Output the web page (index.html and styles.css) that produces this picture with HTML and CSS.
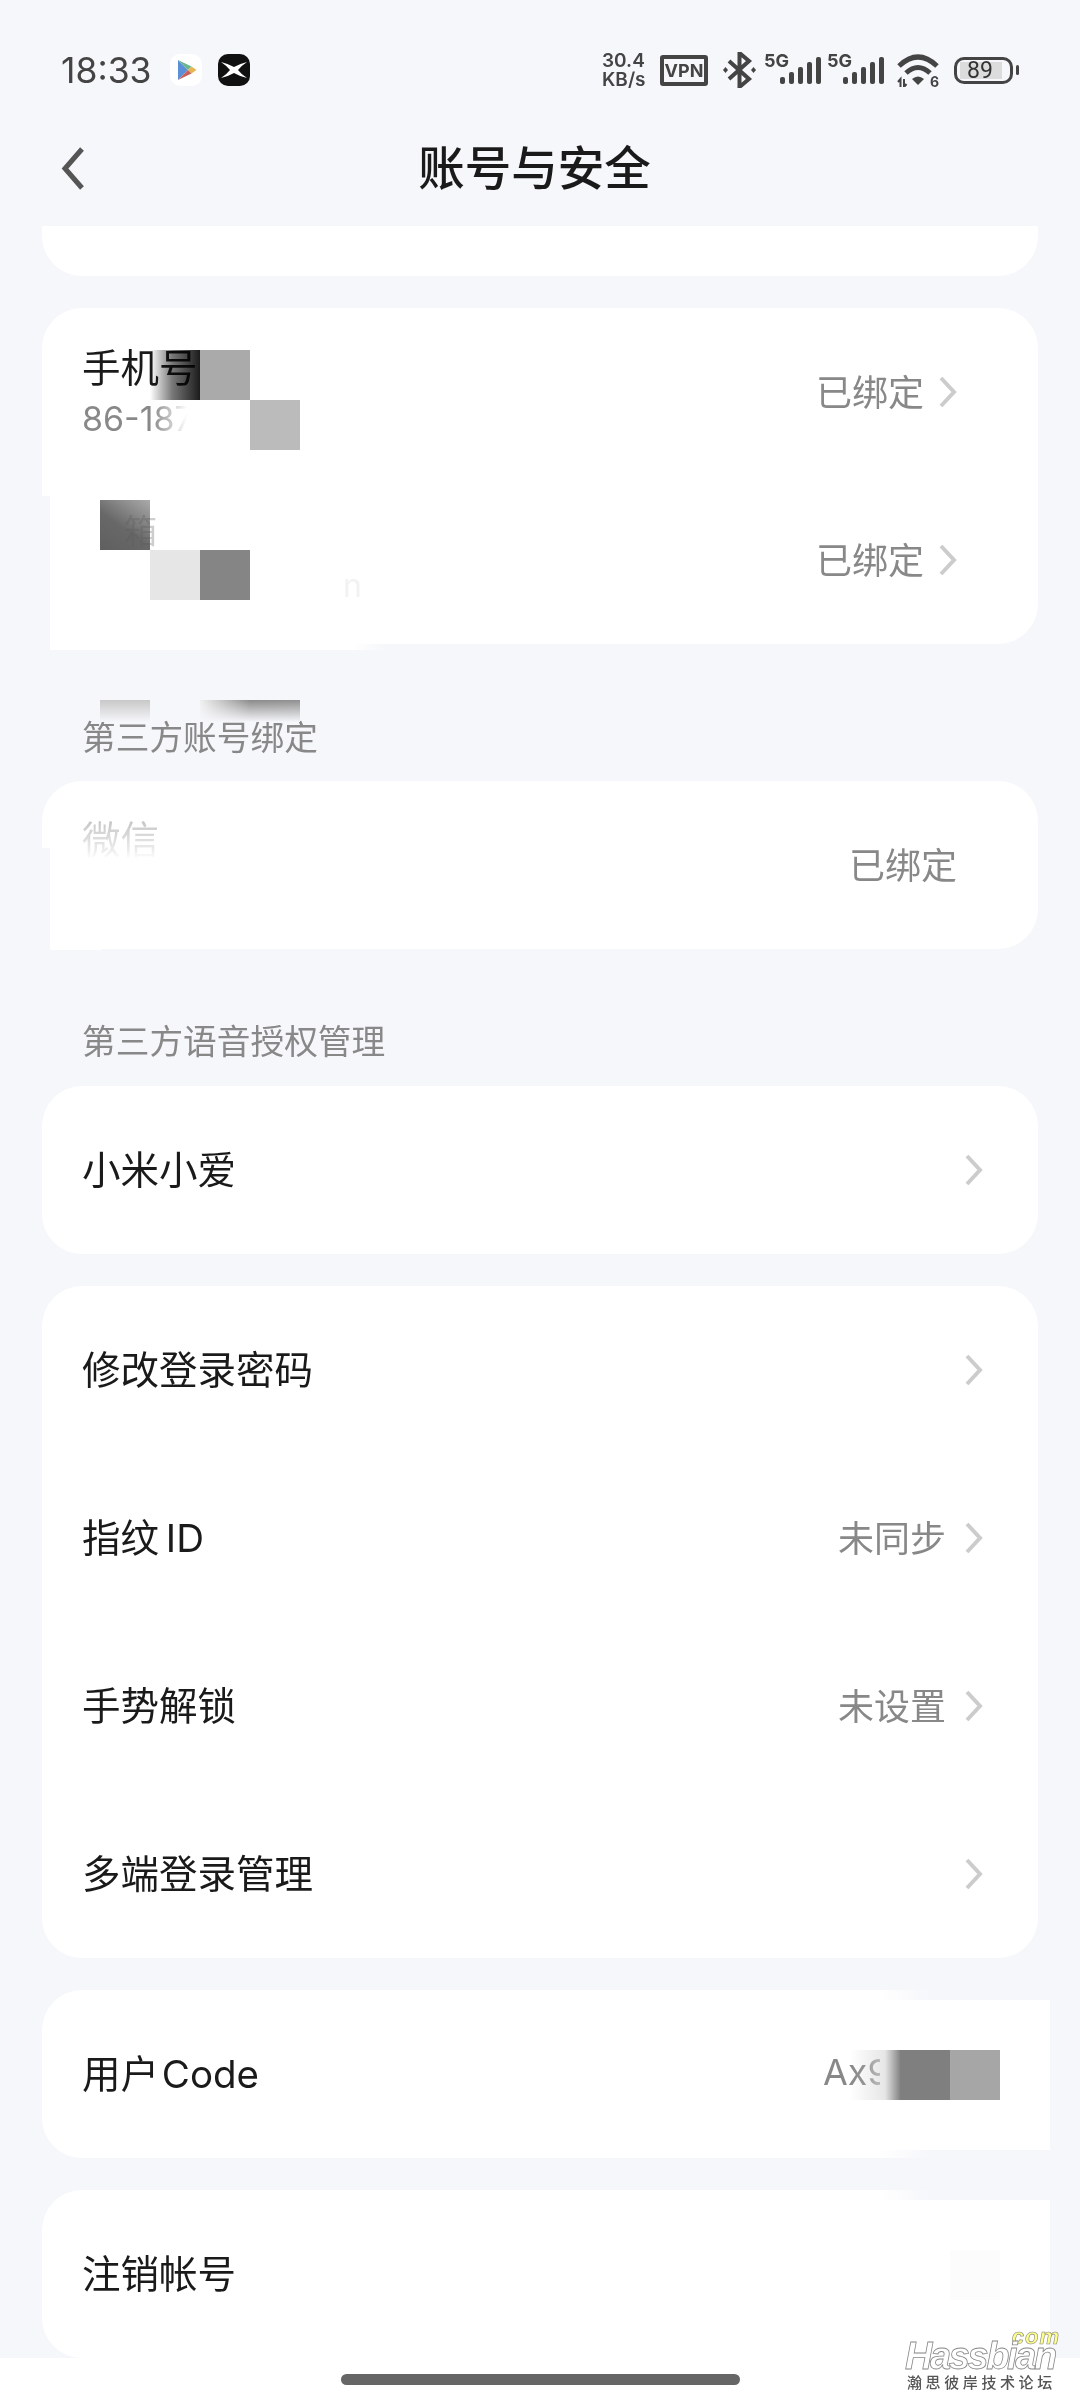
FILE: index.html
```html
<!DOCTYPE html>
<html lang="zh-CN">

<head>
	<meta charset="UTF-8">
	<meta name="viewport" content="width=device-width, initial-scale=1.0">
	<title>账号与安全</title>
	<link rel="stylesheet" href="styles.css">
</head>

<body>
	<div id="status-bar">
		<div class="status-left">
			<span class="clock">18:33</span>
			<svg class="app-icon play-icon" viewBox="0 0 32 32">
				<rect width="32" height="32" rx="10" fill="#fff" />
				<polygon points="8,6 8,26 18,16" fill="#5b8fd8" />
				<polygon points="8,6 21.5,12.5 18,16" fill="#6bb58c" />
				<polygon points="21.5,12.5 26.5,16 21.5,19.5 18,16" fill="#e8b650" />
				<polygon points="8,26 21.5,19.5 18,16" fill="#c8605a" />
			</svg>
			<svg class="app-icon" viewBox="0 0 32 32">
				<rect width="32" height="32" rx="10" fill="#111" />
				<path d="M3 8 Q11 10 16 13 Q21 10 29 8 Q23 12 20 16 Q23 20 29 24 Q21 22 16 19 Q11 22 3 24 Q9 20 12 16 Q9 12 3 8 Z" fill="#fff" />
			</svg>
		</div>
		<div class="status-right">
			<div class="net-speed">30.4<br>KB/s</div>
			<div class="vpn">VPN</div>
			<svg class="bt-icon" viewBox="0 0 33 36">
				<path d="M6 9 L26 27 L16.5 35 V1 L26 9 L6 27" fill="none" stroke="#444" stroke-width="4" />
				<polygon points="0,18 2.5,15 5,18 2.5,21" fill="#444" />
				<polygon points="28,18 30.5,15 33,18 30.5,21" fill="#444" />
			</svg>
			<div class="signal">
				<span class="gen">5G</span>
				<div class="bars"><i class="b1"></i><i class="b2"></i><i class="b3"></i><i class="b4"></i><i class="b5"></i></div>
			</div>
			<div class="signal">
				<span class="gen">5G</span>
				<div class="bars"><i class="b1"></i><i class="b2"></i><i class="b3"></i><i class="b4"></i><i class="b5"></i></div>
			</div>
			<svg class="wifi-icon" viewBox="0 0 42 33">
				<path d="M2 12 Q21 -6 40 12" fill="none" stroke="#444" stroke-width="5" />
				<path d="M9 19 Q21 8 33 19" fill="none" stroke="#444" stroke-width="5" />
				<path d="M15 25 Q21 20 27 25 L21 31 Z" fill="#444" />
				<path d="M1 28 L3.5 25 V33 M7 25 V33 L9.5 30" fill="none" stroke="#444" stroke-width="2" />
				<text x="33" y="33" class="wifi-six">6</text>
			</svg>
			<div class="battery">
				<div class="battery-body"><span class="battery-fill">89</span></div>
				<div class="battery-cap"></div>
			</div>
		</div>
	</div>

	<div id="nav-bar">
		<svg class="back-icon" viewBox="0 0 24 43">
			<path d="M21 2 L4 21.5 L21 41" fill="none" stroke="#555" stroke-width="5" />
		</svg>
		<h1>账号与安全</h1>
		<span></span>
	</div>

	<div class="card card-cut"></div>

	<div class="card">
		<div class="row">
			<div>
				<div class="row-title stacked">手机号</div>
				<div class="row-sub">86-187</div>
			</div>
			<div class="row-right bound">
				<span class="row-value">已绑定</span>
				<svg class="chevron" viewBox="0 0 18 32"><path d="M2 2 L15 16 L2 30" /></svg>
			</div>
		</div>
		<div class="row">
			<div></div>
			<div class="row-right bound">
				<span class="row-value">已绑定</span>
				<svg class="chevron" viewBox="0 0 18 32"><path d="M2 2 L15 16 L2 30" /></svg>
			</div>
		</div>
	</div>

	<div class="section-label first">第三方账号绑定</div>
	<div class="card">
		<div class="row">
			<div class="row-title wechat">微信</div>
			<div class="row-right bound"><span class="row-value">已绑定</span></div>
		</div>
	</div>

	<div class="section-label second">第三方语音授权管理</div>
	<div class="card">
		<div class="row">
			<div class="row-title">小米小爱</div>
			<div class="row-right">
				<svg class="chevron" viewBox="0 0 18 32"><path d="M2 2 L15 16 L2 30" /></svg>
			</div>
		</div>
	</div>

	<div class="card">
		<div class="row">
			<div class="row-title">修改登录密码</div>
			<div class="row-right">
				<svg class="chevron" viewBox="0 0 18 32"><path d="M2 2 L15 16 L2 30" /></svg>
			</div>
		</div>
		<div class="row">
			<div class="row-title">指纹 ID</div>
			<div class="row-right">
				<span class="row-value">未同步</span>
				<svg class="chevron" viewBox="0 0 18 32"><path d="M2 2 L15 16 L2 30" /></svg>
			</div>
		</div>
		<div class="row">
			<div class="row-title">手势解锁</div>
			<div class="row-right">
				<span class="row-value">未设置</span>
				<svg class="chevron" viewBox="0 0 18 32"><path d="M2 2 L15 16 L2 30" /></svg>
			</div>
		</div>
		<div class="row">
			<div class="row-title">多端登录管理</div>
			<div class="row-right">
				<svg class="chevron" viewBox="0 0 18 32"><path d="M2 2 L15 16 L2 30" /></svg>
			</div>
		</div>
	</div>

	<div class="card">
		<div class="row">
			<div class="row-title code-title">用户 Code</div>
			<div class="row-right code-wrap"><span class="row-value user-code">Ax9</span></div>
		</div>
	</div>

	<div class="card card-last">
		<div class="row">
			<div class="row-title">注销帐号</div>
		</div>
	</div>

	<div id="home-strip">
		<div class="home-pill"></div>
	</div>

	<!-- redaction patches lying over the cards -->
	<div class="patch patch-mail"></div>
	<div class="patch patch-wechat"></div>
	<div class="patch patch-code"><div class="patch-white"></div></div>
	<div class="patch patch-cancel"><div class="patch-white"></div></div>
	<span class="mail-end">n</span>

	<div class="tile tile-phone-a"></div>
	<div class="tile tile-phone-b"></div>
	<div class="tile tile-phone-c"></div>
	<div class="tile tile-mail-a"><span>箱</span></div>
	<div class="tile tile-mail-b"></div>
	<div class="tile tile-mail-c"></div>
	<div class="tile tile-label-a"></div>
	<div class="tile tile-label-b"></div>
	<div class="tile tile-code-a"></div>
	<div class="tile tile-code-b"></div>
	<div class="tile tile-code-c"></div>
	<div class="tile tile-cancel"></div>

	<div id="watermark">
		<span class="wm-com">com</span>
		<span class="wm-name">Hassbian</span>
		<span class="wm-cn">瀚思彼岸技术论坛</span>
	</div>
</body>

</html>
```

FILE: styles.css
```css
body {
	margin: 0;
	width: 1080px;
	height: 2400px;
	position: relative;
	overflow: hidden;
	background: #f6f7fb;
	color: #1a1a1a;
	font-family: 'Inter', 'Noto Sans CJK SC', sans-serif;
}

/* status bar */

#status-bar {
	height: 140px;
	padding: 0 61px;
	display: flex;
	justify-content: space-between;
	align-items: center;
}

.status-left {
	display: flex;
	align-items: center;
}

.clock {
	width: 109px;
	font-size: 35.5px;
	color: #444;
}

.app-icon {
	width: 32px;
	height: 32px;
	margin-right: 16px;
}

.status-right {
	display: flex;
	align-items: center;
	color: #444;
}

.net-speed {
	width: 50px;
	font-size: 19px;
	line-height: 19px;
	font-weight: 600;
	white-space: nowrap;
	margin-right: 8px;
}

.vpn {
	width: 48px;
	height: 31px;
	box-sizing: border-box;
	border: 4px solid #444;
	border-radius: 3px;
	font-size: 18px;
	line-height: 23px;
	font-weight: 700;
	text-align: center;
	margin-right: 15px;
}

.bt-icon {
	width: 33px;
	height: 36px;
	margin-right: 8px;
}

.signal {
	position: relative;
	width: 57px;
	height: 36px;
	margin-right: 6px;
}

.signal + .signal {
	margin-right: 13px;
}

.gen {
	position: absolute;
	left: 0;
	top: 0;
	font-size: 18px;
	line-height: 18px;
	font-weight: 700;
}

.bars {
	position: absolute;
	right: 0;
	bottom: 4px;
	display: flex;
	align-items: flex-end;
	gap: 3.5px;
}

.bars i {
	display: block;
	width: 5.5px;
	background: #444;
	border-radius: 2px;
}

.bars .b1 {
	height: 7px;
}

.bars .b2 {
	height: 12px;
}

.bars .b3 {
	height: 17px;
}

.bars .b4 {
	height: 22px;
}

.bars .b5 {
	height: 27px;
}

.wifi-icon {
	width: 42px;
	height: 33px;
	margin-right: 15px;
}

.wifi-six {
	font-size: 14px;
	font-weight: 700;
	fill: #444;
}

.battery {
	display: flex;
	align-items: center;
}

.battery-body {
	width: 59px;
	height: 27px;
	box-sizing: border-box;
	border: 3px solid #444;
	border-radius: 10px;
	padding: 2px 3px;
}

.battery-fill {
	display: block;
	width: 42px;
	height: 17px;
	background: #dcdcdc;
	font-family: 'Roboto', sans-serif;
	font-size: 23px;
	line-height: 17px;
	text-indent: 7px;
	color: #333;
}

.battery-cap {
	width: 3px;
	height: 10px;
	margin-left: 3px;
	background: #444;
	border-radius: 2px;
}

/* title bar */

#nav-bar {
	height: 56px;
	padding: 0 72px 0 61px;
	margin-bottom: 30px;
	display: grid;
	grid-template-columns: 1fr auto 1fr;
	align-items: center;
}

.back-icon {
	width: 24px;
	height: 43px;
}

h1 {
	margin: 0;
	font-size: 46.5px;
	line-height: 56px;
	font-weight: 500;
}

/* list */

.card {
	margin: 0 42px 32px;
	background: #fff;
	border-radius: 40px;
}

.card-cut {
	height: 50px;
	border-radius: 0 0 40px 40px;
}

.card-last {
	margin-bottom: 0;
}

.row {
	height: 168px;
	padding: 0 55px 0 40px;
	display: flex;
	justify-content: space-between;
	align-items: center;
}

.row-title {
	font-size: 38.5px;
	line-height: 50px;
	word-spacing: -4px;
}

.row-title.stacked {
	line-height: 46px;
	margin-bottom: 8px;
}

.row-title.code-title {
	word-spacing: -8px;
}

.row-sub {
	font-size: 34px;
	line-height: 40px;
	background: linear-gradient(90deg, #888 70px, transparent 105px);
	-webkit-background-clip: text;
	background-clip: text;
	color: transparent;
}

.wechat {
	margin-top: -50px;
	background: linear-gradient(180deg, #c4c4c4 5px, #eee 36px, transparent 44px);
	-webkit-background-clip: text;
	background-clip: text;
	color: transparent;
}

.row-right {
	display: flex;
	align-items: center;
	gap: 19px;
}

.bound {
	gap: 15px;
	margin-right: 26px;
}

.row-value {
	font-size: 36px;
	color: #888;
	margin-bottom: 5px;
}

.chevron {
	width: 18px;
	height: 32px;
	fill: none;
	stroke: #ccc;
	stroke-width: 4;
}

.code-wrap {
	margin-right: -17px;
}

.user-code {
	width: 177px;
	background: linear-gradient(90deg, #888 42px, #bbb 62px);
	-webkit-background-clip: text;
	background-clip: text;
	color: transparent;
}

.section-label {
	padding: 0 0 27px 82px;
	font-size: 33.7px;
	line-height: 34px;
	color: #888;
	margin-top: -32px;
}

.section-label.first {
	padding-top: 77px;
	padding-bottom: 26px;
}

.section-label.second {
	padding-top: 76px;
	padding-bottom: 27px;
}

#home-strip {
	height: 42px;
	background: #fff;
	display: flex;
	justify-content: center;
	align-items: center;
}

.home-pill {
	width: 399px;
	height: 11px;
	border-radius: 6px;
	background: #666;
}

/* redaction leftovers */

.patch {
	position: absolute;
}

.patch-mail {
	left: 42px;
	top: 496px;
	width: 345px;
	height: 154px;
	background: linear-gradient(90deg, #f6f7fb 8px, #fff 8px, #fff 310px, rgba(255, 255, 255, 0) 345px);
}

.patch-wechat {
	left: 42px;
	top: 848px;
	width: 60px;
	height: 102px;
	background: linear-gradient(90deg, #f6f7fb 8px, rgba(255, 255, 255, 0) 8px), linear-gradient(180deg, rgba(255, 255, 255, 0) 40px, #fff 40px);
}

.patch-code,
.patch-cancel {
	left: 880px;
	width: 170px;
	height: 168px;
	padding-top: 10px;
	box-sizing: border-box;
	background: linear-gradient(90deg, rgba(246, 247, 251, 0), #f6f7fb 50px);
}

.patch-code {
	top: 1990px;
}

.patch-cancel {
	top: 2190px;
}

.patch-white {
	height: 150px;
	background: #fff;
}

.patch-cancel .patch-white {
	height: 158px;
}

.mail-end {
	position: absolute;
	left: 343px;
	top: 567px;
	font-size: 32px;
	line-height: 38px;
	color: #f2f2f2;
}

.tile {
	position: absolute;
	width: 50px;
	height: 50px;
}

.tile-phone-a {
	left: 150px;
	top: 350px;
	background: linear-gradient(90deg, #fff, #777 45%, #1c1c1c);
	mix-blend-mode: multiply;
}

.tile-phone-b {
	left: 200px;
	top: 350px;
	background: #aaa;
}

.tile-phone-c {
	left: 250px;
	top: 400px;
	background: #bbb;
}

.tile-mail-a {
	left: 100px;
	top: 500px;
	background: linear-gradient(215deg, #aaa, #686868 55%, #5f5f5f);
}

.tile-mail-a span {
	position: absolute;
	left: 24px;
	top: 12px;
	font-size: 33px;
	line-height: 38px;
	color: rgba(90, 90, 90, 0.3);
}

.tile-mail-b {
	left: 150px;
	top: 550px;
	background: #e6e6e6;
}

.tile-mail-c {
	left: 200px;
	top: 550px;
	background: #858585;
}

.tile-label-a {
	left: 100px;
	top: 700px;
	height: 22px;
	background: linear-gradient(180deg, #c8c8c8, #f6f7fb);
}

.tile-label-b {
	left: 200px;
	top: 700px;
	width: 100px;
	height: 22px;
	background: linear-gradient(180deg, rgba(246, 247, 251, 0), #f6f7fb), linear-gradient(90deg, #f0f0f0, #8a8a8a 50%, #909090);
}

.tile-code-a {
	left: 850px;
	top: 2050px;
	background: linear-gradient(90deg, rgba(255, 255, 255, 0), rgba(200, 200, 200, 0.45) 70%, #858585);
}

.tile-code-b {
	left: 900px;
	top: 2050px;
	background: #7f7f7f;
}

.tile-code-c {
	left: 950px;
	top: 2050px;
	background: #a6a6a6;
}

.tile-cancel {
	left: 950px;
	top: 2250px;
	background: #fcfcfc;
}

#watermark {
	position: absolute;
	left: 905px;
	top: 2330px;
	width: 160px;
	height: 62px;
}

.wm-com {
	position: absolute;
	right: 5px;
	top: -2px;
	font: italic bold 22px/18px 'Liberation Sans', sans-serif;
	letter-spacing: 1px;
	color: #ffff88;
	-webkit-text-stroke: 0.6px #888;
}

.wm-name {
	position: absolute;
	left: 0;
	top: 12px;
	font: italic bold 38px/28px 'Liberation Sans', sans-serif;
	letter-spacing: -2.4px;
	color: #fff;
	-webkit-text-stroke: 0.8px #888;
}

.wm-cn {
	position: absolute;
	left: 2px;
	top: 44px;
	font-size: 15px;
	line-height: 18px;
	letter-spacing: 3.6px;
	font-weight: 500;
	color: #555;
	white-space: nowrap;
}
```
